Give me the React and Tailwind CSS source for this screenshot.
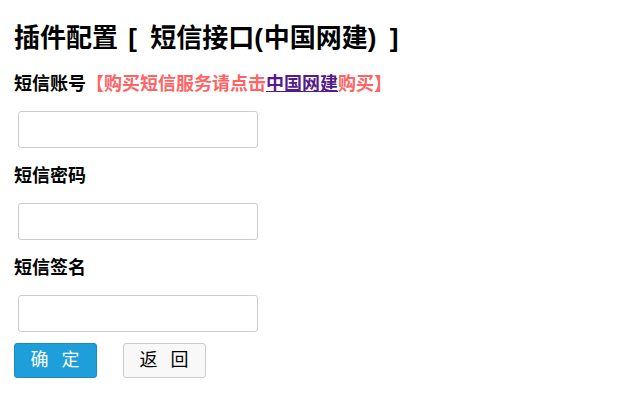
export default function App() {
  const font = { fontFamily: '"Liberation Sans", "Noto Sans CJK SC", sans-serif' };
  return (
    <div className="min-h-screen bg-white px-[14px] pt-[20px] text-black" style={font}>
      <h1 className="text-[26px] font-bold leading-[36px]">
        插件配置<span className="tracking-[3px]"> [ </span>短信接口<span className="tracking-[1px]">(</span>中国网建<span className="tracking-[3px]">) ]</span>
      </h1>

      <div className="mt-[15px] text-[18px] font-bold leading-[26px]">
        短信账号
        <span className="text-[#ff6464]">
          【购买短信服务请点击
          <a href="#" className="text-[#551a8b] underline">中国网建</a>
          购买】
        </span>
      </div>
      <input className="mt-[14px] ml-[4px] block h-[37px] w-[240px] rounded-[3px] border border-[#ccc] bg-white px-2 outline-none" />

      <div className="mt-[15px] text-[18px] font-bold leading-[26px]">短信密码</div>
      <input className="mt-[14px] ml-[4px] block h-[37px] w-[240px] rounded-[3px] border border-[#ccc] bg-white px-2 outline-none" />

      <div className="mt-[15px] text-[18px] font-bold leading-[26px]">短信签名</div>
      <input className="mt-[14px] ml-[4px] block h-[37px] w-[240px] rounded-[3px] border border-[#ccc] bg-white px-2 outline-none" />

      <div className="mt-[11px] flex gap-[26px]">
        <button className="h-[35px] w-[83px] rounded-[3px] border border-[#1a8bc4] bg-[#1e9fd9] pl-[3px] text-[18px] tracking-[4px] text-white">
          确 定
        </button>
        <button className="h-[35px] w-[83px] rounded-[3px] border border-[#ccc] bg-[#f8f8f8] pl-[3px] text-[18px] tracking-[4px] text-black">
          返 回
        </button>
      </div>
    </div>
  );
}
